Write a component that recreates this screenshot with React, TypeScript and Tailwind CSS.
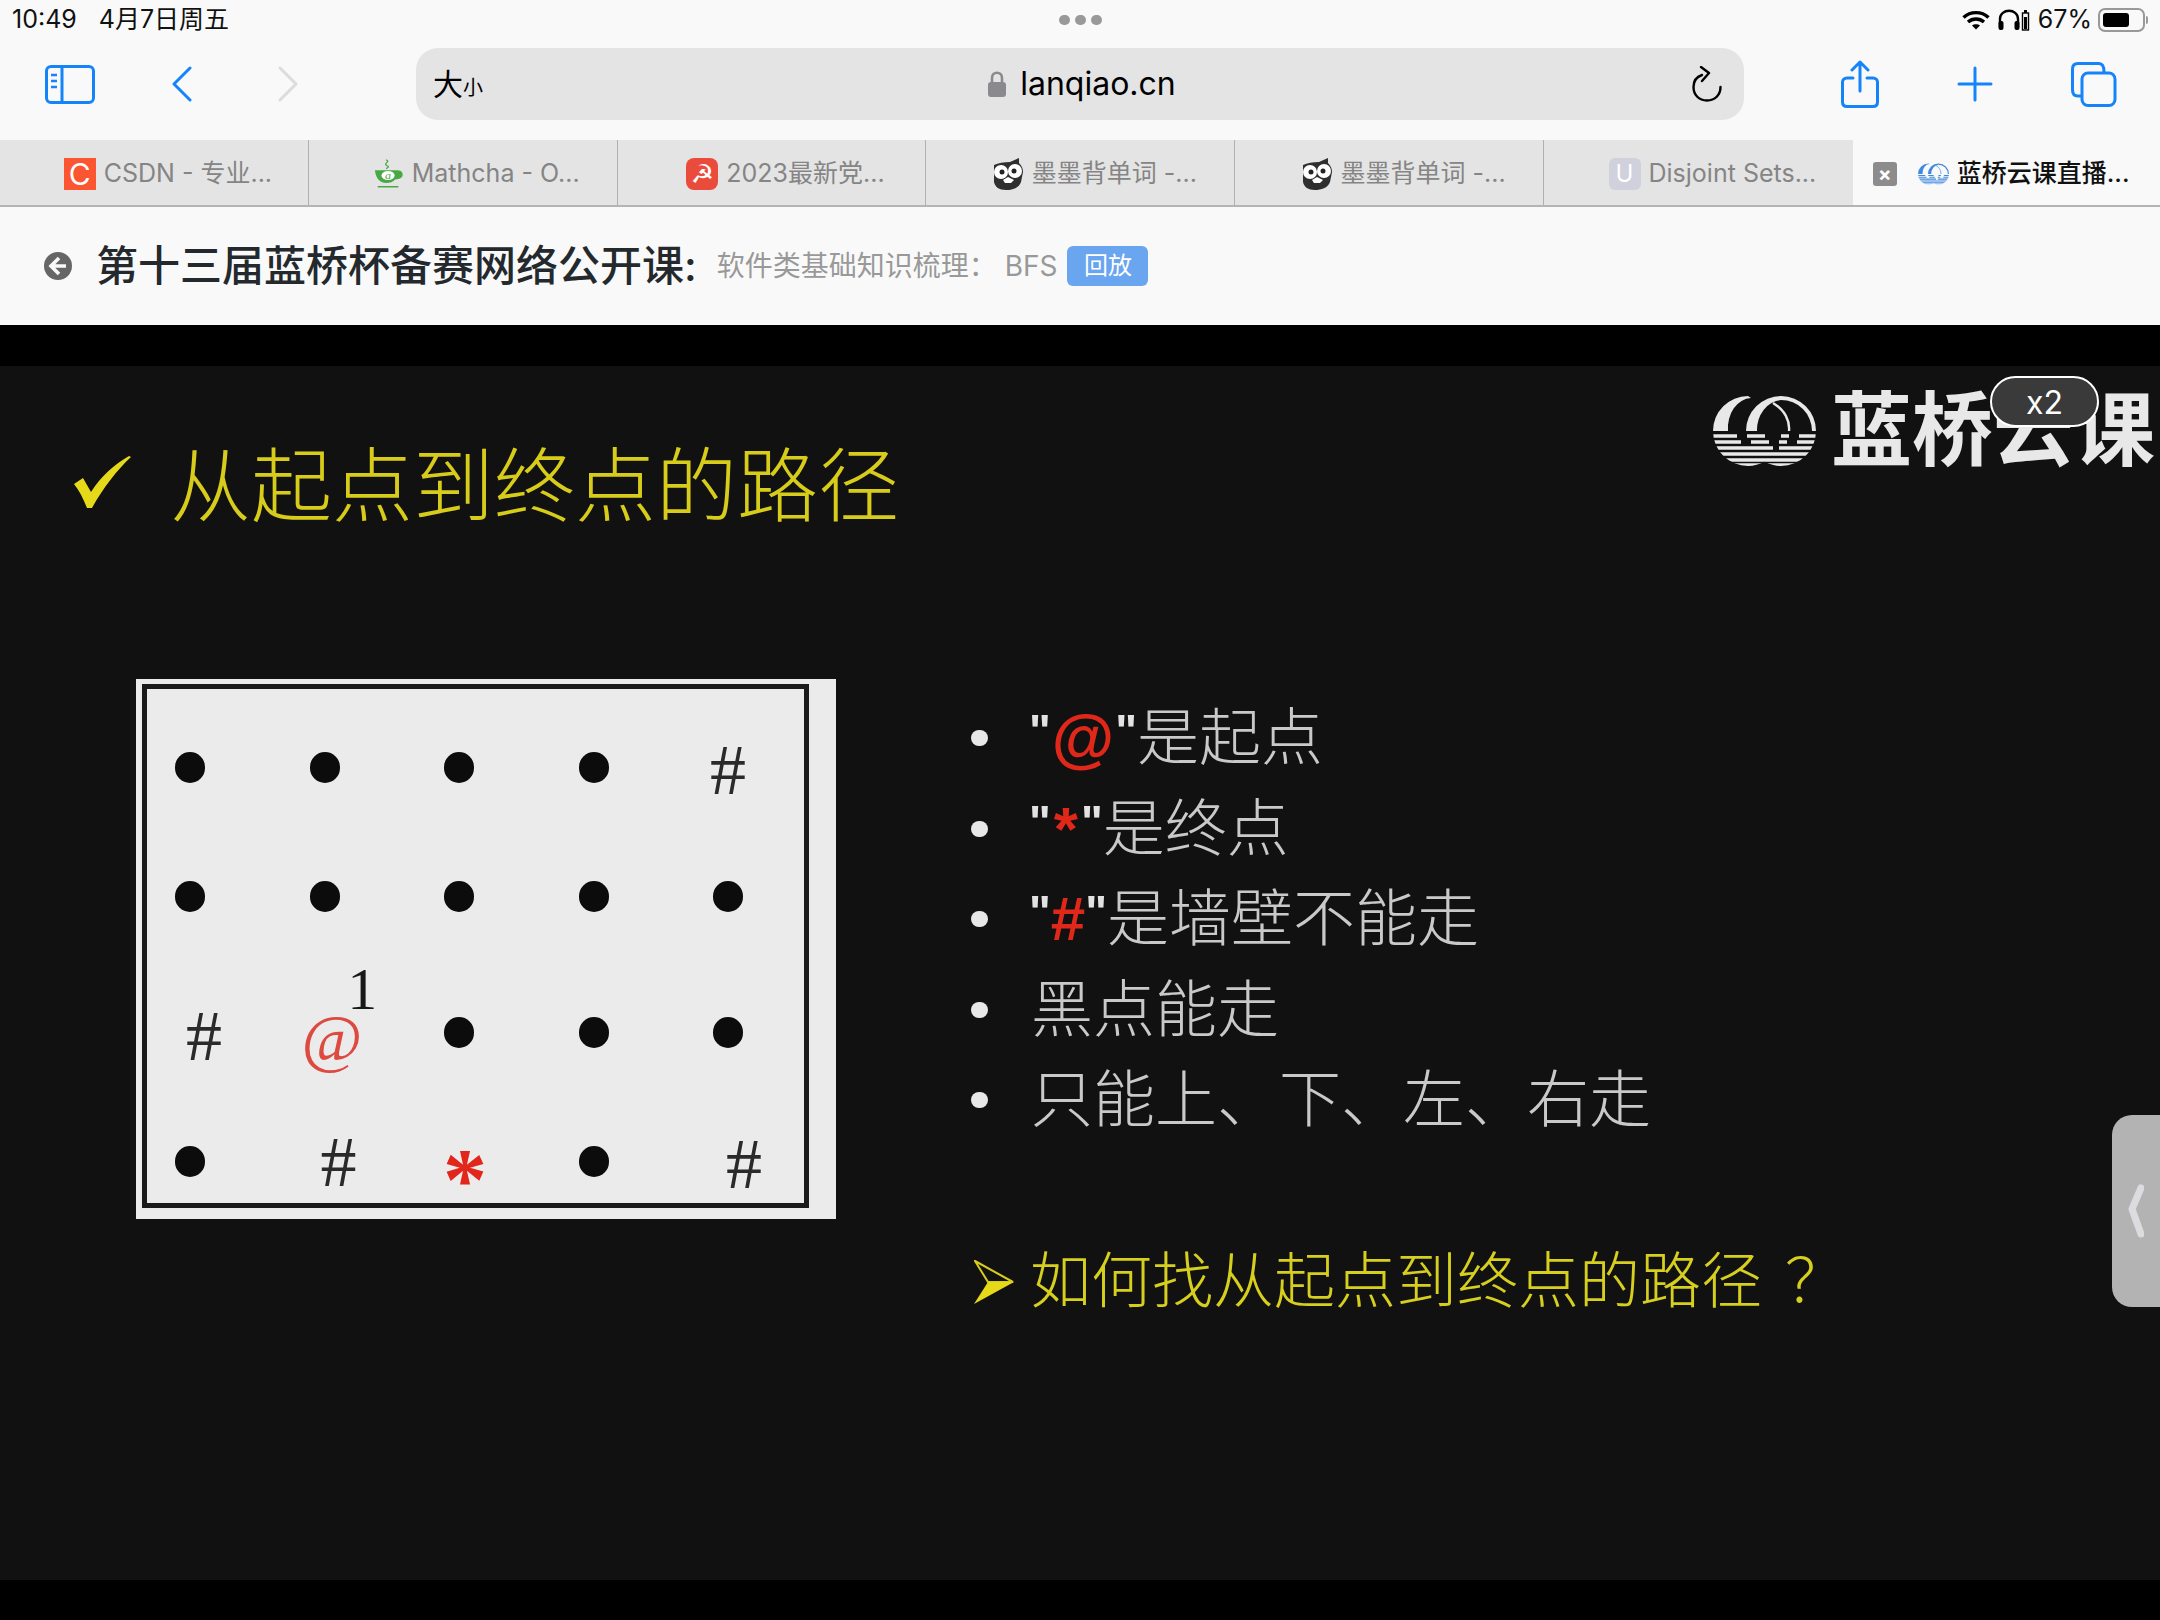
import type { ReactNode } from "react";

const BLUE = "#1584fa";

const Owl = () => (
  <svg width="32" height="32" viewBox="0 0 32 32" className="shrink-0">
    <path d="M2 7 C6 5 12 4 18 4 L27 0 L27 5 C30 8 31 11 31 14 L29 24 C27 30 20 32 14 32 C7 32 3 29 2 24 Z" fill="#2f2f2f" />
    <circle cx="9" cy="14" r="7" fill="#fff" />
    <circle cx="23" cy="13" r="7" fill="#fff" />
    <circle cx="10" cy="14" r="2.5" fill="#222" />
    <circle cx="22" cy="13" r="2.5" fill="#222" />
    <path d="M11 22 L16 19 L22 22 L19 25 L13 25 Z" fill="#fff" />
  </svg>
);

const Cup = () => (
  <svg width="30" height="30" viewBox="0 0 32 40" className="shrink-0" preserveAspectRatio="none">
    <path d="M13 1 C18 4 9 6 14 9 C18 11 12 12 14 13" fill="none" stroke="#48a944" strokeWidth="1.5" />
    <path d="M1 15 H25 C31 15 32 22 29 25 C27 27 25 27 23 27 C20 31 17 32 13 32 C7 32 2 27 1 15 Z" fill="#48a944" />
    <ellipse cx="15" cy="22" rx="7" ry="6" fill="#fff" />
    <text x="15" y="27" textAnchor="middle" fontSize="13" fontStyle="italic" fill="#48a944" fontFamily="Liberation Serif">a</text>
    <rect x="4" y="36" width="22" height="2" fill="#48a944" />
  </svg>
);

const Rings = ({ color, width, height, id }: { color: string; width: number; height: number; id: string }) => (
  <svg width={width} height={height} viewBox="0 0 103 72" className="shrink-0">
    <defs>
      <clipPath id={id}>
        <circle cx="35" cy="36" r="35" />
        <circle cx="68" cy="36" r="35" />
      </clipPath>
    </defs>
    <path d="M35 1 A35 35 0 0 0 0 36 H15 A24 30 0 0 1 38 3 Z" fill={color} />
    <path d="M68 1 A35 35 0 0 0 33 36 H44 A26 30 0 0 1 68 5 A31 31 0 0 1 99 36 H103 A35 35 0 0 0 68 1 Z" fill={color} />
    <path d="M60 8 C72 15 77 26 76 36" fill="none" stroke={color} strokeWidth="2.4" />
    <g stroke={color} strokeWidth="3.4" fill="none" clipPath={`url(#${id})`}>
      <path d="M0 41 H24 M34 41 H52 M68 41 H76 M86 41 H103" />
      <path d="M0 47 H28 M38 47 H56 M66 47 H74 M84 47 H103" />
      <path d="M0 53 H60 M66 53 H103" />
      <path d="M0 59 H103" />
      <path d="M0 65 H103" />
      <path d="M0 70 H103" />
    </g>
  </svg>
);

type TabItem = { title: string; icon: ReactNode };

const tabs: TabItem[] = [
  {
    title: "CSDN - 专业...",
    icon: (
      <span className="flex h-8 w-8 shrink-0 items-center justify-center bg-[#fc5531] text-[30px] leading-none text-white">C</span>
    ),
  },
  { title: "Mathcha - O...", icon: <Cup /> },
  {
    title: "2023最新党...",
    icon: (
      <span className="flex h-8 w-8 shrink-0 items-center justify-center rounded-lg bg-[#ea4c3c] font-['DejaVu_Sans'] text-[26px] leading-none text-white">☭</span>
    ),
  },
  { title: "墨墨背单词 -...", icon: <Owl /> },
  { title: "墨墨背单词 -...", icon: <Owl /> },
  {
    title: "Disjoint Sets...",
    icon: (
      <span className="flex h-8 w-8 shrink-0 items-center justify-center rounded-md bg-[#d0d1dc] text-[24px] leading-none text-white">U</span>
    ),
  },
];

const board: { kind: string; cls?: string }[] = [
  { kind: "dot" }, { kind: "dot" }, { kind: "dot" }, { kind: "dot" }, { kind: "#", cls: "translate-y-[2px]" },
  { kind: "dot" }, { kind: "dot" }, { kind: "dot" }, { kind: "dot" }, { kind: "dot" },
  { kind: "#", cls: "translate-x-[14px] translate-y-[3px]" }, { kind: "@" }, { kind: "dot" }, { kind: "dot" }, { kind: "dot" },
  { kind: "dot" }, { kind: "#", cls: "translate-x-[14px]" }, { kind: "*" }, { kind: "dot" }, { kind: "#", cls: "translate-x-[16px] translate-y-[2px]" },
];

const BoardCell = ({ kind, cls }: { kind: string; cls?: string }) => {
  if (kind === "dot") {
    return <span className="h-[31px] w-[30px] rounded-full bg-[#0c0c0c]" />;
  }
  if (kind === "#") {
    return <span className={`text-[72px] leading-none text-[#2a2a2a] ${cls ?? ""}`}>#</span>;
  }
  if (kind === "@") {
    return (
      <span className="relative translate-x-[7px] translate-y-[5px] text-[66px] italic leading-none text-[#dc4a40]">
        @
        <span className="absolute left-[46px] top-[-46px] text-[60px] not-italic leading-none text-[#181818]">1</span>
      </span>
    );
  }
  return <span className="translate-x-[6px] translate-y-[18px] text-[88px] font-bold leading-none text-[#e3261b]">*</span>;
};

const Bullet = ({ children }: { children: ReactNode }) => (
  <li className="flex h-[90.5px] items-center">
    <span className="h-[16px] w-[17px] shrink-0 rounded-full bg-[#e8e8e8]" />
    <span className="ml-[43px] flex items-center text-[62px] font-light leading-none text-[#c9c9c9]">{children}</span>
  </li>
);

const Quote = () => (
  <span className="-translate-y-[7px] font-['Liberation_Sans'] text-[46px] font-bold text-[#e2e2e2]">"</span>
);

export default function App() {
  return (
    <div className="flex h-[1620px] w-[2160px] flex-col overflow-hidden bg-black font-[Inter,'Noto_Sans_CJK_SC',sans-serif]">
      {/* status bar */}
      <div className="grid h-[48px] grid-cols-3 bg-[#f9f9f9] pb-2 pl-3 pr-3">
        <div className="flex items-center gap-[22px] text-[25px] text-[#111]">
          <span>10:49</span>
          <span>4月7日周五</span>
        </div>
        <div className="flex items-center justify-center gap-[5px]">
          <span className="h-[10px] w-[11px] rounded-full bg-[#999]" />
          <span className="h-[10px] w-[11px] rounded-full bg-[#999]" />
          <span className="h-[10px] w-[11px] rounded-full bg-[#999]" />
        </div>
        <div className="flex items-center justify-end">
          <svg width="28" height="20" viewBox="0 0 28 20" fill="none" stroke="#000" strokeWidth="3.4">
            <path d="M1.5 7.5 C8.5 1 19.5 1 26.5 7.5" />
            <path d="M6 12 C10.5 8 17.5 8 22 12" />
            <path d="M14 19.5 L10 15.5 C12 13.8 16 13.8 18 15.5 Z" fill="#000" stroke="none" />
          </svg>
          <svg width="32" height="22" viewBox="0 0 32 22" fill="none" className="ml-[8px]">
            <path d="M2 18 V10 C2 -1 20 -1 20 10 V18" stroke="#000" strokeWidth="2.4" />
            <rect x="0.5" y="12" width="5" height="9" rx="2" fill="#000" />
            <rect x="16.5" y="12" width="5" height="9" rx="2" fill="#000" />
            <rect x="24.5" y="4" width="6" height="17" stroke="#000" strokeWidth="1.4" />
            <rect x="26" y="8" width="3" height="12" fill="#000" />
            <rect x="26" y="1" width="3" height="3" fill="#000" />
          </svg>
          <span className="ml-[8px] text-[25px] text-[#111]">67%</span>
          <span className="ml-[6px] flex h-[24px] w-[47px] items-center rounded-[7px] border-2 border-[#999] p-[3px]">
            <span className="h-full w-[26px] rounded-[3px] bg-black" />
          </span>
          <span className="ml-[1px] h-[8px] w-[2px] rounded-r bg-[#999]" />
        </div>
      </div>

      {/* toolbar */}
      <div className="flex h-[92px] items-start bg-[#f9f9f9] pl-[45px]">
        <div className="flex h-[72px] items-center">
          <svg width="50" height="39" viewBox="0 0 50 39" fill="none" stroke={BLUE} strokeWidth="3">
            <rect x="1.5" y="1.5" width="47" height="36" rx="4.5" />
            <path d="M17 1.5 V37.5" />
            <path d="M6 10 H12 M6 16 H12 M6 22 H12" strokeWidth="2.4" />
          </svg>
          <svg width="20" height="36" viewBox="0 0 20 36" fill="none" stroke={BLUE} strokeWidth="3" strokeLinecap="round" strokeLinejoin="round" className="ml-[77px]">
            <path d="M18 2 L2 18 L18 34" />
          </svg>
          <svg width="20" height="36" viewBox="0 0 20 36" fill="none" stroke="#dcdcdc" strokeWidth="3" strokeLinecap="round" strokeLinejoin="round" className="ml-[86px]">
            <path d="M2 2 L18 18 L2 34" />
          </svg>
        </div>
        <div className="ml-[118px] grid h-[72px] w-[1328px] grid-cols-[1fr_auto_1fr] items-center rounded-[22px] bg-[#e4e4e4] pl-[17px] pr-[22px]">
          <div className="flex items-baseline text-black">
            <span className="text-[30px] leading-none">大</span>
            <span className="text-[20px] leading-none">小</span>
          </div>
          <div className="ml-[9px] flex items-center gap-[14px]">
            <svg width="18" height="26" viewBox="0 0 18 26" fill="none">
              <path d="M4 12 V7 C4 0 14 0 14 7 V12" stroke="#8a8a8e" strokeWidth="2.6" />
              <rect x="0" y="11" width="18" height="15" rx="3" fill="#8a8a8e" />
            </svg>
            <span className="text-[32px] leading-none text-black">lanqiao.cn</span>
          </div>
          <div className="flex justify-end">
            <svg width="30" height="36" viewBox="0 0 30 36" fill="none" stroke="#000" strokeWidth="2.4" strokeLinecap="round" strokeLinejoin="round">
              <path d="M10 9 C4 11 1.5 16 1.5 21 C1.5 29 7 34.5 15 34.5 C23 34.5 28.5 29 28.5 21" />
              <path d="M9 1 L17 7 L10 15" />
            </svg>
          </div>
        </div>
        <div className="flex h-[72px] items-center">
          <svg width="38" height="48" viewBox="0 0 38 48" fill="none" stroke={BLUE} strokeWidth="3" strokeLinecap="round" strokeLinejoin="round" className="ml-[97px]">
            <path d="M12 18 H6 C3 18 1.5 20 1.5 22 V42 C1.5 45 3 46.5 6 46.5 H32 C35 46.5 36.5 45 36.5 42 V22 C36.5 20 35 18 32 18 H26" />
            <path d="M19 31 V2 M11 10 L19 2 L27 10" />
          </svg>
          <svg width="36" height="36" viewBox="0 0 36 36" stroke={BLUE} strokeWidth="3" strokeLinecap="round" className="ml-[78px]">
            <path d="M18 2 V34 M2 18 H34" />
          </svg>
          <svg width="46" height="45" viewBox="0 0 46 45" fill="none" stroke={BLUE} strokeWidth="3" className="ml-[78px]">
            <path d="M10 34 H7 C3.5 34 1.5 32 1.5 28 V7 C1.5 3.5 3.5 1.5 7 1.5 H28 C31 1.5 33 3.5 33 10" />
            <rect x="11" y="11" width="33" height="32.5" rx="6" />
          </svg>
        </div>
      </div>

      {/* tab strip */}
      <div className="flex h-[67px] border-b-2 border-[#b4b4b4] bg-[#e4e4e4]">
        {tabs.map((tab, i) => (
          <div
            key={i}
            className={`flex w-[308.8px] items-center justify-center gap-2 pl-[28px] pt-[2px] text-[25px] text-[#858585] ${i < 5 ? "border-r border-[#b0b0b0]" : ""}`}
          >
            {tab.icon}
            <span className="whitespace-nowrap">{tab.title}</span>
          </div>
        ))}
        <div className="flex flex-1 items-center bg-[#f9f9f9] pl-[20px] pt-[2px]">
          <span className="flex h-6 w-6 items-center justify-center rounded-[3px] bg-[#8c8c8c] text-[20px] font-bold leading-none text-white">×</span>
          <span className="ml-[21px]">
            <Rings color="#3f8ae0" width={31} height={26} id="rings-tab" />
          </span>
          <span className="ml-[8px] whitespace-nowrap text-[25px] font-medium text-[#111]">蓝桥云课直播...</span>
        </div>
      </div>

      {/* page header */}
      <div className="flex h-[118px] items-center bg-[#f9f9f9] pl-[44px]">
        <svg width="28" height="28" viewBox="0 0 28 28" className="shrink-0">
          <circle cx="14" cy="14" r="14" fill="#666" />
          <path d="M15 6 L7 14 L15 22 M7.5 14 H22" fill="none" stroke="#f9f9f9" strokeWidth="3.6" />
        </svg>
        <span className="ml-[24px] whitespace-nowrap text-[42px] font-medium leading-none text-[#24292e]">第十三届蓝桥杯备赛网络公开课:</span>
        <span className="ml-[20px] whitespace-nowrap text-[28px] leading-none text-[#999]">软件类基础知识梳理： BFS</span>
        <span className="ml-[10px] flex h-10 w-[81px] items-center justify-center rounded-md bg-[#6aa5ef] text-[24px] leading-none text-white">回放</span>
      </div>

      {/* video */}
      <div className="relative mt-[41px] h-[1214px] bg-[#111]">
        <div className="blur-[0.7px]">
          <div className="flex items-start justify-between">
            <div className="mt-[80px] flex h-[80px] items-center pl-[73px]">
              <svg width="58" height="52" viewBox="0 0 58 52" className="mb-[8px]">
                <path d="M1 28 L10 22 L18 36 C28 20 42 8 56 0 L58 1 C44 14 30 32 19 52 L14 52 C10 42 6 34 1 28 Z" fill="#e6d91a" />
              </svg>
              <span className="ml-[39px] whitespace-nowrap text-[81px] font-light leading-none text-[#d8cc1a]">从起点到终点的路径</span>
            </div>
            <div className="mr-[5px] mt-[24px] flex items-center">
              <Rings color="#e8e8e8" width={103} height={72} id="rings-logo" />
              <span className="ml-[15px] whitespace-nowrap text-[81px] font-bold leading-none text-[#e8e8e8]">蓝桥云课</span>
            </div>
          </div>

          <div className="mt-[153px] flex items-start pl-[136px]">
            <div className="h-[540px] w-[700px] shrink-0 bg-[#ebebeb] pl-[6px] pt-[5px] font-['Liberation_Serif']">
              <div className="h-[524px] w-[667px] border-[5px] border-[#1a1a1a] pl-[13px] pt-[14px]">
                <div className="grid w-[598px] grid-cols-[repeat(5,60px)] grid-rows-[129px_129px_143px_115px] justify-between">
                  {board.map((cell, i) => (
                    <div key={i} className="flex items-center justify-center">
                      <BoardCell kind={cell.kind} cls={cell.cls} />
                    </div>
                  ))}
                </div>
              </div>
            </div>

            <div className="ml-[135px] mt-[14px]">
              <ul>
                <Bullet>
                  <span className="-ml-[2px]" />
                  <Quote />
                  <span className="mx-[1px] font-['Liberation_Sans'] text-[64px] font-bold text-[#e0281a]">@</span>
                  <Quote />
                  是起点
                </Bullet>
                <Bullet>
                  <span className="-ml-[2px]" />
                  <Quote />
                  <span className="mx-[3px] font-['Liberation_Sans'] font-bold text-[#e0281a]">*</span>
                  <Quote />
                  是终点
                </Bullet>
                <Bullet>
                  <span className="-ml-[2px]" />
                  <Quote />
                  <span className="font-['Liberation_Sans'] font-bold text-[#e0281a]">#</span>
                  <Quote />
                  是墙壁不能走
                </Bullet>
                <Bullet>黑点能走</Bullet>
                <Bullet>只能上、下、左、右走</Bullet>
              </ul>
              <div className="mt-[91px] flex h-[90px] items-center">
                <svg width="40" height="44" viewBox="0 0 40 44" className="ml-[3px] shrink-0">
                  <path d="M1 1 L39 22 H14 Z" fill="none" stroke="#d8cc1a" strokeWidth="2" />
                  <path d="M0 44 L14 22 H40 Z" fill="#e6d91a" />
                </svg>
                <span className="ml-[16px] whitespace-nowrap text-[61px] font-light leading-none text-[#d6cf1e]">如何找从起点到终点的路径</span>
                <span className="ml-[23px] whitespace-nowrap text-[61px] font-light leading-none text-[#d6cf1e]">？</span>
              </div>
            </div>
          </div>
        </div>

        {/* speed badge */}
        <div className="absolute left-[1990px] top-[10px] flex h-[51px] w-[109px] items-center justify-center rounded-full border-2 border-white bg-[#3a3a3a] pt-[2px] text-[32px] leading-none text-white">
          x2
        </div>

        {/* side handle */}
        <div className="absolute right-0 top-[749px] flex h-[192px] w-[48px] items-center rounded-l-[20px] bg-[#b3b3b3] pl-[16px]">
          <svg width="16" height="54" viewBox="0 0 16 54" fill="none" stroke="#dcdce0" strokeWidth="7" strokeLinecap="round" strokeLinejoin="round">
            <path d="M13 4 L4 25 L13 50" />
          </svg>
        </div>
      </div>
    </div>
  );
}
